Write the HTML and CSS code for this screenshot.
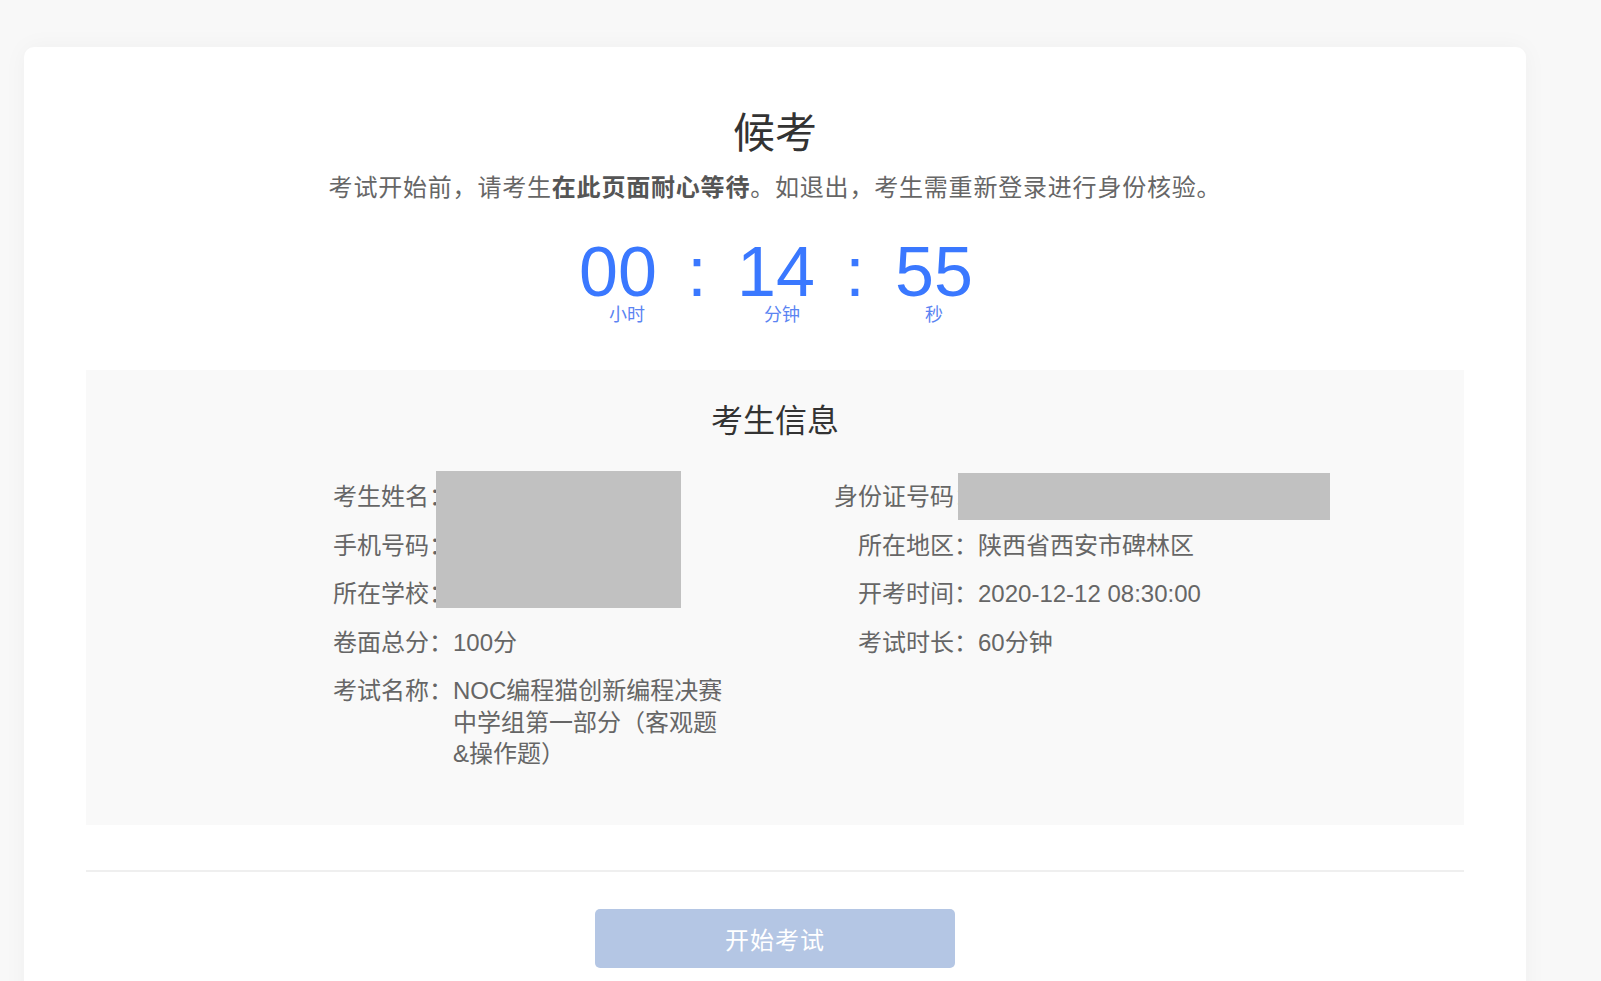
FILE: index.html
```html
<!DOCTYPE html>
<html>
<head>
    <meta charset="UTF-8">
    <title>候考</title>
    <meta name="viewport" content="width=device-width, initial-scale=1.0">
    <link rel="stylesheet" href="styles.css">
</head>
<body>
    <div class="page">
        <div class="card">
            <h1 class="title">候考</h1>
            <p class="tip">考试开始前，请考生<b>在此页面耐心等待</b>。如退出，考生需重新登录进行身份核验。</p>

            <div class="countdown">
                <div class="unit">
                    <span class="num" id="hh">00</span>
                    <span class="unit-label lbl-h">小时</span>
                </div>
                <span class="colon">:</span>
                <div class="unit">
                    <span class="num" id="mm">14</span>
                    <span class="unit-label lbl-m">分钟</span>
                </div>
                <span class="colon">:</span>
                <div class="unit">
                    <span class="num" id="ss">55</span>
                    <span class="unit-label lbl-s">秒</span>
                </div>
            </div>

            <div class="info">
                <h2 class="info-title">考生信息</h2>
                <div class="info-grid">
                    <div class="row"><span class="label">考生姓名：</span><span class="value left"></span></div>
                    <div class="row"><span class="label">身份证号码：</span><span class="value"></span></div>
                    <div class="row"><span class="label">手机号码：</span><span class="value left"></span></div>
                    <div class="row"><span class="label">所在地区：</span><span class="value">陕西省西安市碑林区</span></div>
                    <div class="row"><span class="label">所在学校：</span><span class="value left"></span></div>
                    <div class="row"><span class="label">开考时间：</span><span class="value">2020-12-12 08:30:00</span></div>
                    <div class="row"><span class="label">卷面总分：</span><span class="value left">100分</span></div>
                    <div class="row"><span class="label">考试时长：</span><span class="value">60分钟</span></div>
                    <div class="row"><span class="label">考试名称：</span><span class="value left">NOC编程猫创新编程决赛中学组第一部分（客观题&amp;操作题）</span></div>
                </div>
                <!-- datos personales ocultos -->
                <div class="mask mask-left"></div>
                <div class="mask mask-right"></div>
            </div>

            <div class="divider"></div>

            <div class="actions">
                <button class="btn-start" disabled>开始考试</button>
            </div>
        </div>
    </div>

    <script>
        // Cuenta atrás hasta el inicio del examen
        var left = 0 * 3600 + 14 * 60 + 55;

        function pad(n) {
            return n < 10 ? '0' + n : '' + n;
        }

        function tick() {
            if (left <= 0) return;
            left--;
            document.getElementById('hh').textContent = pad(Math.floor(left / 3600));
            document.getElementById('mm').textContent = pad(Math.floor(left % 3600 / 60));
            document.getElementById('ss').textContent = pad(left % 60);
        }

        setTimeout(function() {
            setInterval(tick, 1000);
        }, 60000);
    </script>
</body>
</html>
```

FILE: styles.css
```css
body {
    font-family: "Liberation Sans", Arial, "Noto Sans CJK SC", sans-serif;
    margin: 0;
    background-color: #f8f8f8;
    color: #666;
    overflow: hidden;
}
.page {
    padding: 47px 0 0 24px;
}
.card {
    width: 1502px;
    min-height: 960px;
    background: #fff;
    border-radius: 10px;
    box-shadow: 0 0 24px rgba(0, 0, 0, 0.04);
    padding: 62px 62px 0;
    box-sizing: border-box;
}
.title {
    margin: 0;
    font-size: 42px;
    line-height: 50px;
    font-weight: normal;
    color: #333;
    text-align: center;
}
.tip {
    margin: 13px 0 0;
    font-size: 24px;
    line-height: 32px;
    text-align: center;
    color: #666;
    letter-spacing: 0.8px;
}
.tip b {
    color: #555;
}
.countdown {
    display: flex;
    justify-content: center;
    align-items: flex-start;
    margin-top: 36px;
    padding-left: 2px;
}
.unit {
    display: flex;
    flex-direction: column;
    align-items: center;
    width: 80px;
}
.num {
    font-size: 70px;
    line-height: 64px;
    color: #3a78ff;
}
.unit-label {
    font-size: 18px;
    line-height: 22px;
    color: #5b84f2;
}
.lbl-h {
    margin-left: 18px;
}
.lbl-m {
    margin-left: 12px;
}
.colon {
    font-size: 70px;
    line-height: 64px;
    color: #3a78ff;
    width: 20px;
    text-align: center;
    margin: 0 29px;
}
.info {
    position: relative;
    margin-top: 44px;
    background: #f9f9f9;
    padding: 31px 0 55px 217px;
}
.info-title {
    margin: 0 0 0 -217px;
    font-size: 32px;
    line-height: 40px;
    font-weight: normal;
    color: #333;
    text-align: center;
}
.info-grid {
    display: grid;
    grid-template-columns: 525px 1fr;
    row-gap: 17px;
    margin-top: 40px;
}
.row {
    display: flex;
    font-size: 24px;
    line-height: 31.5px;
}
.label {
    width: 150px;
    flex: none;
    text-align: right;
    color: #666;
}
.value {
    color: #666;
}
.value.left {
    width: 276px;
}
.mask {
    position: absolute;
    background: #c1c1c1;
}
.mask-left {
    left: 350px;
    top: 101px;
    width: 245px;
    height: 137px;
}
.mask-right {
    left: 872px;
    top: 103px;
    width: 372px;
    height: 47px;
}
.divider {
    height: 2px;
    background: #efefef;
    margin-top: 45px;
}
.actions {
    display: flex;
    justify-content: center;
    margin-top: 37px;
}
.btn-start {
    width: 360px;
    height: 59px;
    border: none;
    border-radius: 5px;
    background: #b4c6e4;
    color: #fff;
    font-family: inherit;
    font-size: 24px;
    letter-spacing: 1px;
}
```
